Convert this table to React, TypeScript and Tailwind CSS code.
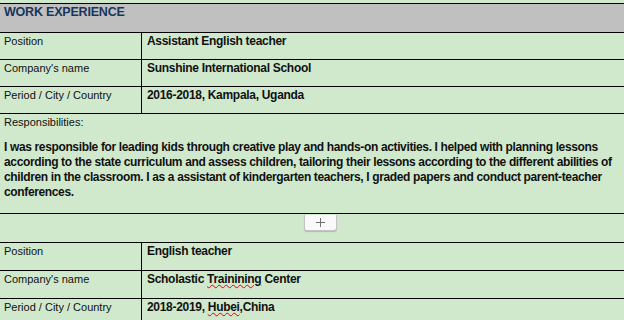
const rows1 = [
  { label: "Position", value: "Assistant English teacher" },
  { label: "Company's name", value: "Sunshine International School" },
  { label: "Period / City / Country", value: "2016-2018, Kampala, Uganda" },
];

function Row({ label, children, h }: { label: string; children: React.ReactNode; h: string }) {
  return (
    <div className={`flex border-b border-black ${h}`}>
      <div className="w-[142px] shrink-0 border-r border-black pl-[4px] pt-[1px] text-[11px] leading-[14px]">
        {label}
      </div>
      <div className="flex-1 pl-[5px] pt-[1px] text-[12px] font-bold leading-[14px] tracking-[-0.3px]">
        {children}
      </div>
    </div>
  );
}

export default function App() {
  return (
    <div
      className="h-[320px] w-[624px] overflow-hidden bg-[#d0e8cc] text-[#111]"
      style={{ fontFamily: '"Liberation Sans", Arial, sans-serif' }}
    >
      <div className="h-[3px]" />
      <div className="h-[30px] border-y border-black bg-[#c0c0c0] pl-[4px] pt-[1px] text-[12.5px] font-bold leading-[14px] tracking-[-0.2px] text-[#17365d]">
        WORK EXPERIENCE
      </div>
      {rows1.map((r) => (
        <Row key={r.label} label={r.label} h="h-[27px]">
          {r.value}
        </Row>
      ))}
      <div className="h-[100px] border-b border-black px-[4px] pt-[1px]">
        <p className="text-[11px] leading-[14px]">Responsibilities:</p>
        <p className="mt-[11px] text-[12px] font-bold leading-[15px] tracking-[-0.36px]">
          I was responsible for leading kids through creative play and hands-on activities. I helped with planning lessons
          according to the state curriculum and assess children, tailoring their lessons according to the different
          abilities of children in the classroom. I as a assistant of kindergarten teachers, I graded papers and conduct
          parent-teacher conferences.
        </p>
      </div>
      <div className="flex h-[29px] border-b border-black pl-[304px] pt-[1px]">
        <button className="flex h-[16px] w-[33px] items-center justify-center rounded-b-[3px] border border-t-0 border-[#c4c4c4] bg-[#f9f9f9] shadow-[0_1px_1px_rgba(0,0,0,0.18)]">
          <svg width="9" height="9" viewBox="0 0 9 9">
            <path d="M4.5 0v9M0 4.5h9" stroke="#707070" strokeWidth="1" />
          </svg>
        </button>
      </div>
      <Row label="Position" h="h-[28px]">
        English teacher
      </Row>
      <Row label="Company's name" h="h-[28px]">
        Scholastic <span className="underline decoration-red-600 decoration-wavy decoration-1">Trainining</span> Center
      </Row>
      <Row label="Period / City / Country" h="h-[28px]">
        2018-2019, <span className="underline decoration-red-600 decoration-wavy decoration-1">Hubei</span>,China
      </Row>
    </div>
  );
}
